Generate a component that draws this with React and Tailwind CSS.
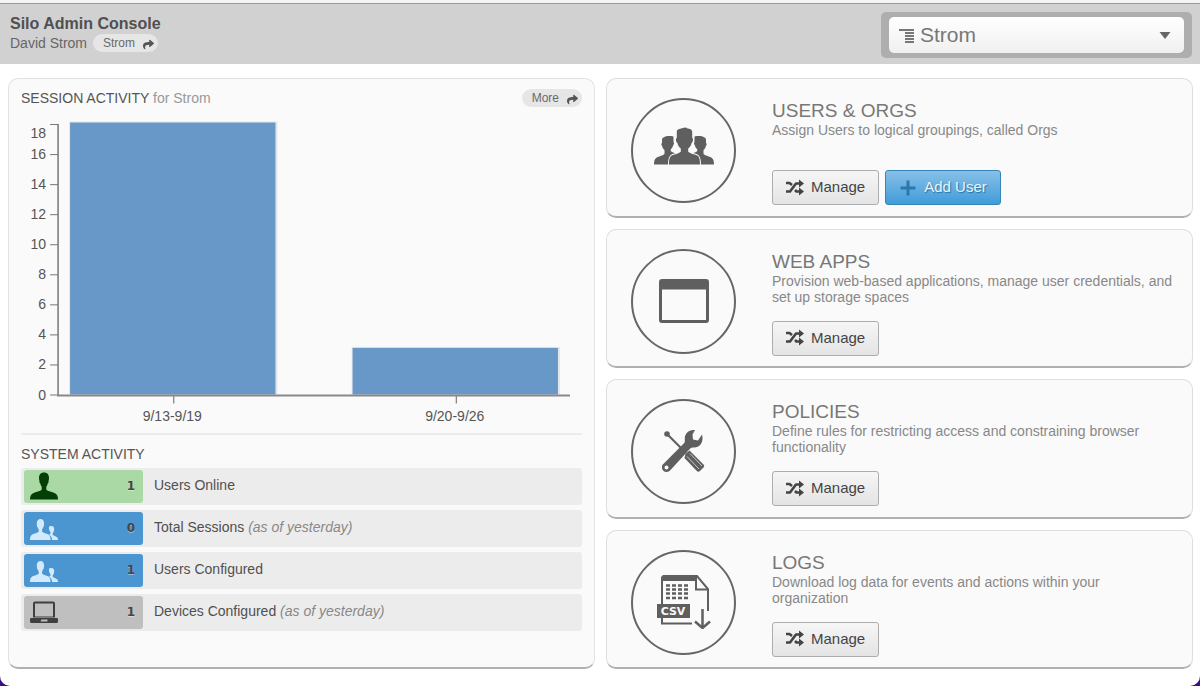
import React, { useState } from 'react';
import { FaShare } from 'react-icons/fa';

const chartData = [
    { label: '9/13-9/19', value: 18.1, x: 49 },
    { label: '9/20-9/26', value: 3.1, x: 331 },
];

const yTicks = [0, 2, 4, 6, 8, 10, 12, 14, 16, 18];

const stats = [
    { count: 1, label: 'Users Online', color: 'bg-[#abd9a5]', icon: <PersonIcon /> },
    { count: 0, label: 'Total Sessions', note: '(as of yesterday)', color: 'bg-[#4b95d1]', icon: <PairIcon /> },
    { count: 1, label: 'Users Configured', color: 'bg-[#4b95d1]', icon: <PairIcon /> },
    { count: 1, label: 'Devices Configured', note: '(as of yesterday)', color: 'bg-[#bfbfbf]', icon: <LaptopIcon /> },
];

const sections = [
    {
        title: 'USERS & ORGS',
        text: 'Assign Users to logical groupings, called Orgs',
        icon: <GroupIcon />,
        canAdd: true,
    },
    {
        title: 'WEB APPS',
        text: 'Provision web-based applications, manage user credentials, and set up storage spaces',
        icon: <WindowIcon />,
    },
    {
        title: 'POLICIES',
        text: 'Define rules for restricting access and constraining browser functionality',
        icon: <ToolsIcon />,
    },
    {
        title: 'LOGS',
        text: 'Download log data for events and actions within your organization',
        icon: <CsvIcon />,
    },
];

function PersonIcon() {
    return (
        <svg className="w-7 h-7" viewBox="0 0 28 28" fill="#053f05">
            <path d="M14 0.500c3.300 0 5 2.200 5 5.500 0 1.200-.1 2-.5 3 .3 1-.1 2-.8 2.500-.3 1.500-.8 2.500-1.400 3.200v3c1.500 1.600 5.700 2 8.700 3.500 2 1 3 2.800 3 6.300H0c0-3.500 1-5.300 3-6.300 3-1.500 7.200-1.900 8.700-3.500v-3c-.6-.7-1.100-1.700-1.400-3.200-.7-.5-1.100-1.500-.8-2.500-.4-1-.5-1.800-.5-3 0-3.300 1.700-5.500 5-5.500z" />
        </svg>
    );
}

function PairIcon() {
    return (
        <svg className="w-7 h-7" viewBox="0 0 28 28" fill="#d3eafc">
            <path d="M10.500 5c2.300 0 3.600 1.700 3.600 4.200 0 1.300-.2 1.700-.3 2.400.2.800-.1 1.400-.7 1.700-.2 1-.6 1.600-1 2v2.500c1.300 1.300 4.300 1.700 6.300 2.800 1.900 1 2.100 3 2.100 5.400H0c0-2.400.4-4.400 2.200-5.400 2-1.100 5.300-1.500 6.500-2.800v-2.500c-.4-.4-.8-1-1-2-.6-.3-.9-.9-.7-1.700-.1-.7-.2-1.100-.2-2.400C6.800 6.700 8.200 5 10.500 5z" />
            <path d="M21.500 12c1.700 0 2.700 1.200 2.700 3 0 .9-.2 1.400-.3 1.900 0 .5-.2.900-.5 1.100-.1.600-.3 1-.7 1.300v1.500c.7.900 2.300 1.200 3.500 1.900 1.400.8 1.800 1.600 1.800 3.300h-6c0-2.300-.7-4.200-3-5.600.8-.3 1.200-.5 1.500-1v-1.300c-.3-.3-.6-.7-.7-1.200-.3-.2-.5-.6-.5-1.100-.2-.5-.4-.9-.4-1.800 0-1.700 1-2 2.600-2z" />
        </svg>
    );
}

function LaptopIcon() {
    return (
        <svg className="w-7 h-7" viewBox="0 0 28 28" fill="#3f3f3f">
            <path fillRule="evenodd" d="M5 3.500h18A2 2 0 0 1 25 5.500v14h-22V5.500a2 2 0 0 1 2-2zM5 5.500v13h18v-13z" />
            <path fillRule="evenodd" d="M1 20h26a1 1 0 0 1 1 1v2.500a1.500 1.500 0 0 1-1.500 1.500h-25A1.500 1.500 0 0 1 0 23.500v-2.500a1 1 0 0 1 1-1zM11.500 21.500l-1 2h7v-2z" />
        </svg>
    );
}

function GroupIcon() {
    return (
        <svg className="w-16 h-[52px]" viewBox="0 0 64 52" fill="#5f5f5f">
            <path d="M12.500 12c1.500-1.200 5.500-1.200 9-.5v5.500c.8.500.5 2.500-.3 3.300-.5 2-1.400 3.200-2.400 4v2c2.300 1.500 5 2 7.200 3.200V39.500H2c0-3.300.5-5.800 2.700-7 2.300-1.300 5.500-1.600 7.800-3.500V25c-1.300-1-2-2.300-2.400-4-.9-.7-1-2.700-.1-3v-3c0-2 1-2.500 2.500-3z" />
            <path d="M51.500 12c-1.500-1.200-5.500-1.200-9-.5v5.500c-.8.500-.5 2.500.3 3.300.5 2 1.400 3.200 2.400 4v2c-2.300 1.500-5 2-7.200 3.200V39.500H62c0-3.300-.5-5.800-2.700-7-2.300-1.300-5.500-1.600-7.800-3.500V25c1.300-1 2-2.300 2.400-4 .9-.7 1-2.700.1-3v-3c0-2-1-2.500-2.500-3z" />
            <path
                stroke="#fafafa"
                strokeWidth="2"
                paintOrder="stroke"
                d="M26 4.500c3-1 5-2 8-2l1.500 1c2.500 0 4.500 1 4.700 3v6.500c1.400.2 1 4-.6 5-.5 2.500-1.800 4.200-3.400 5.500v3.200c2.500 2.300 6 2.300 8.500 3.500 2.800 1.300 3.300 4.500 3.300 9.300H17c0-4.800.5-8 3.300-9.300 2.500-1.200 6-1.200 8.500-3.500V23.500c-1.600-1.300-2.900-3-3.400-5.500-1.600-1-2-4.800-.6-5V7c0-1 .2-2 1.200-2.500z"
            />
        </svg>
    );
}

function WindowIcon() {
    return (
        <svg className="w-[50px] h-11" viewBox="0 0 50 44" fill="#5f5f5f">
            <path fillRule="evenodd" d="M3 0h44a3 3 0 0 1 3 3v38a3 3 0 0 1-3 3H3a3 3 0 0 1-3-3V3a3 3 0 0 1 3-3zM3 10.500v30.500h44v-30.500z" />
        </svg>
    );
}

function ToolsIcon() {
    return (
        <svg className="w-11 h-11" viewBox="0 0 44 44" fill="#5f5f5f">
            <circle cx="5" cy="4" r="2.800" />
            <path d="M5 4l19 19" stroke="#5f5f5f" strokeWidth="2.200" />
            <path d="M23.500 24l4-3.500 14 14c1 1 1 2-.3 3.300l-3 3c-1.200 1.200-2.400 1.200-3.400.2L22.500 28z" />
            <path d="M28 23.500l12 12.500M25 26.500l12 12.500" stroke="#c8c8c8" strokeWidth="1" fill="none" />
            <path fillRule="evenodd" d="M33 0c-6-.4-10.500 3.500-10.200 9 0 2 .2 3-.8 4.300L.8 34.500C-1.500 37.500.5 42 4.500 42c1.800 0 3-1 4-2L28 18.700c1.200-1.300 2.700-1.200 4.500-1.200C38 17.500 42 12 40 4.500l-4 6-5-1-.5-5zM4.500 35.500a2 2 0 1 1 0 4 2 2 0 0 1 0-4z" />
        </svg>
    );
}

function CsvIcon() {
    return (
        <svg className="w-[54px] h-[54px]" viewBox="0 0 54 54">
            <path d="M5 30V4Q5 1 8 1H40L51 14V36" fill="none" stroke="#5f5f5f" strokeWidth="2" />
            <path d="M4 6V4Q4 0 8 0H40V6H4z" fill="#5f5f5f" />
            <path d="M39 2V14.500H51" fill="none" stroke="#5f5f5f" strokeWidth="2" />
            <path d="M5 43V48.500H35" fill="none" stroke="#5f5f5f" strokeWidth="2" />
            <path d="M9 10.500H31M9 14.500H31M9 18.500H31M9 23H31" stroke="#5f5f5f" strokeWidth="2.500" strokeDasharray="4 2" />
            <path d="M45.500 34V52M38 46.500L45.500 53L53 46.500" fill="none" stroke="#5f5f5f" strokeWidth="2.500" />
            <rect x="-1" y="29" width="34" height="14" fill="#5f5f5f" />
            <text x="16" y="40" textAnchor="middle" fill="#fafafa" fontSize="11" fontWeight="bold" fontFamily="DejaVu Sans, sans-serif">CSV</text>
        </svg>
    );
}

function ShuffleIcon() {
    return (
        <svg className="w-[18px] h-[18px]" viewBox="0 0 18 18" fill="currentColor">
            <path d="M0 4h3.500L6 6M0 12.500h4L10 4.500H14M9 11l1.500 1.500H14" fill="none" stroke="currentColor" strokeWidth="2.600" strokeLinejoin="round" />
            <path d="M13 0.500l5 4-5 4zM13 8.500l5 4-5 4z" />
        </svg>
    );
}

function PillButton({ children }) {
    return (
        <button className="flex items-center gap-2 h-[18px] pl-2.5 pr-1 rounded-full bg-[#e6e6e6] text-xs leading-4 text-[#6a6a6a]">
            {children}
            <FaShare className="w-[11px] h-[11px] mt-0.5 text-[#555]" />
        </button>
    );
}

function SessionChart() {
    const yFor = (value) => 284 - value * 15;

    return (
        <svg className="w-full" viewBox="0 0 560 322" fontFamily="Liberation Sans, Arial, sans-serif" fontSize="14" fill="#555">
            {chartData.map((bar) => (
                <g key={bar.label}>
                    <rect x={bar.x - 1} y={yFor(bar.value) - 1} width="208" height={285 - yFor(bar.value)} fill="#e2e6ea" />
                    <rect x={bar.x} y={yFor(bar.value)} width="205" height={284 - yFor(bar.value)} fill="#6898c8" />
                    <path d={`M${bar.x + 103.500} 285v8`} stroke="#666" />
                    <text x={bar.x + 102} y="310" textAnchor="middle">{bar.label}</text>
                </g>
            ))}
            {yTicks.map((tick) => (
                <g key={tick}>
                    <path d={`M29 ${yFor(tick) + 0.5}h8`} stroke="#777" />
                    <text x="25" y={tick === 18 ? 28 : yFor(tick) + 5} textAnchor="end">{tick}</text>
                </g>
            ))}
            <path d="M37 14V285" stroke="#777" strokeWidth="1.500" />
            <path d="M36 285H548" stroke="#888" strokeWidth="2" />
        </svg>
    );
}

function SectionCard({ title, text, icon, canAdd }) {
    return (
        <section className="flex-1 flex gap-9 pl-6 pr-4 pt-[19px] pb-2.5 bg-[#fafafa] border border-[#dedede] border-b-2 border-b-[#b0b0b0] rounded-[10px]">
            <div className="shrink-0 flex items-center justify-center w-[105px] h-[105px] rounded-full border-2 border-[#666]">
                {icon}
            </div>
            <div className="flex flex-col">
                <h2 className="mt-0.5 text-[19px] leading-[22px] text-[#777]">{title}</h2>
                <p className="min-h-8 text-sm leading-4 text-[#888]">{text}</p>
                <div className="flex gap-1.5 mt-4">
                    <button className="flex items-center gap-[7px] h-[35px] px-[13px] rounded-[3px] border border-[#adadad] bg-linear-to-b from-[#f6f6f6] to-[#e4e4e4] text-[15px] text-[#444]">
                        <ShuffleIcon />
                        Manage
                    </button>
                    {canAdd && (
                        <button className="flex items-center gap-[7px] h-[35px] px-[13px] rounded-[3px] border border-[#3286b8] bg-linear-to-b from-[#85c0e8] to-[#3e9cd8] text-[15px] text-[#e8f4fc] text-shadow-[1px_1px_1px_#2a6f9f]">
                            <svg className="w-[18px] h-[18px]" viewBox="0 0 18 18">
                                <path d="M9 1.500v15M1.500 9h15" stroke="#2b78ad" strokeWidth="3" />
                            </svg>
                            Add User
                        </button>
                    )}
                </div>
            </div>
        </section>
    );
}

export default function App() {
    const [org, setOrg] = useState('Strom');

    return (
        <div className="min-h-screen bg-[#3b0f8c] font-['Liberation_Sans',Arial,sans-serif]">
            <div className="min-h-screen pb-4 bg-white rounded-b-[10px]">
                <header className="flex items-start justify-between h-16 pl-2.5 pr-2 bg-[#d1d1d1] border-t-[3px] border-[#f4f4f4] shadow-[inset_0_1px_0_#999]">
                    <div className="pt-3">
                        <h1 className="text-base leading-[18px] font-bold text-[#505050]">Silo Admin Console</h1>
                        <div className="flex items-center gap-1.5 text-sm leading-5 text-[#666]">
                            David Strom
                            <PillButton>Strom</PillButton>
                        </div>
                    </div>
                    <div className="relative mt-[9px] p-[5px] px-2 w-[311px] rounded-[5px] bg-[#aeaeae]">
                        <select
                            aria-label="Organization"
                            value={org}
                            onChange={(e) => setOrg(e.target.value)}
                            className="block w-full h-9 pl-[31px] pr-8 rounded-[5px] appearance-none bg-linear-to-b from-white to-[#f0f0f0] text-[21px] leading-6 text-[#777]"
                        >
                            <option>Strom</option>
                        </select>
                        <svg className="absolute left-[18px] top-4 w-4 h-4 pointer-events-none" viewBox="0 0 16 16">
                            <path d="M0 2h15" stroke="#777" strokeWidth="2" />
                            <path d="M6 5h9M6 8h9M6 11h9M6 14h9" stroke="#777" strokeWidth="2" />
                        </svg>
                        <svg className="absolute right-[21px] top-5 w-3 h-[7px] pointer-events-none" viewBox="0 0 12 7">
                            <path d="M0.500 0h11L6 7z" fill="#666" />
                        </svg>
                    </div>
                </header>

                <main className="grid grid-cols-2 gap-[11px] pl-2 pr-[7px] pt-3.5">
                    <section className="min-h-[591px] px-3 pt-2 bg-[#fafafa] border border-[#e2e2e2] border-b-2 border-b-[#b0b0b0] rounded-[10px]">
                        <div className="flex items-start justify-between h-[23px] pt-0.5">
                            <h2 className="text-sm leading-[18px] text-[#555]">
                                SESSION ACTIVITY <span className="text-[#999]">for Strom</span>
                            </h2>
                            <PillButton>More</PillButton>
                        </div>
                        <SessionChart />
                        <h2 className="pt-2.5 pb-[5px] border-t-2 border-[#ececec] text-sm leading-[18px] text-[#555]">SYSTEM ACTIVITY</h2>
                        <ul className="flex flex-col gap-[5px]">
                            {stats.map((stat) => (
                                <li key={stat.label} className="flex items-center gap-[11px] h-[37px] px-[3px] bg-[#ececec] rounded-[3px]">
                                    <div className={`flex items-center justify-between w-[119px] h-[33px] pl-1.5 pr-2 rounded-[3px] ${stat.color}`}>
                                        {stat.icon}
                                        <span className="font-['DejaVu_Sans',sans-serif] text-xs font-bold text-[#444] text-shadow-[0_1px_0_#ffffff66]">{stat.count}</span>
                                    </div>
                                    <div className="text-sm leading-4 pb-0.5 text-[#505050]">
                                        {stat.label} {stat.note && <em className="text-[#888]">{stat.note}</em>}
                                    </div>
                                </li>
                            ))}
                        </ul>
                    </section>

                    <div className="flex flex-col gap-[11px]">
                        {sections.map((section) => (
                            <SectionCard key={section.title} {...section} />
                        ))}
                    </div>
                </main>
            </div>
        </div>
    );
}
